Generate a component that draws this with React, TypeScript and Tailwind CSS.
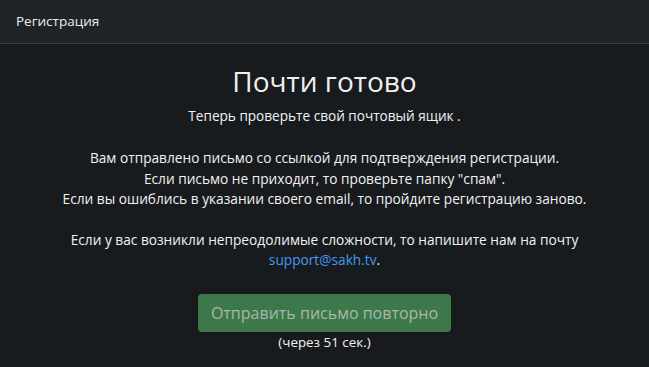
export default function App() {
  return (
    <div className="min-h-screen w-full bg-[#181b1e] text-white" style={{ fontFamily: '"Open Sans", "Noto Sans", sans-serif' }}>
      <div className="h-[44px] flex items-center px-4 bg-[#202326] border-b border-[#3b3e41]">
        <span className="text-[13.5px] text-[#e9ecef]">Регистрация</span>
      </div>
      <div className="flex flex-col items-center text-center pt-[20px]">
        <h1 className="text-[28px] leading-[34px] text-[#f0f0f0]">Почти готово</h1>
        <p className="mt-[8px] text-[13.6px] leading-[20px] text-[#f2f2f2]">Теперь проверьте свой почтовый ящик .</p>
        <p className="mt-[22px] text-[13.7px] leading-[20.5px] text-[#f2f2f2]">
          Вам отправлено письмо со ссылкой для подтверждения регистрации.
          <br />
          Если письмо не приходит, то проверьте папку "спам".
          <br />
          Если вы ошиблись в указании своего email, то пройдите регистрацию заново.
        </p>
        <p className="mt-[20px] text-[13.7px] leading-[20.5px] text-[#f2f2f2]">
          Если у вас возникли непреодолимые сложности, то напишите нам на почту
          <br />
          <a href="#" className="text-[#3d9bf3]">support@sakh.tv</a>.
        </p>
        <button
          disabled
          className="mt-[23px] h-[38px] w-[253px] rounded-[4px] bg-[#3d784b] text-[16px] text-[#a6b8aa]"
        >
          Отправить письмо повторно
        </button>
        <p className="mt-[2px] text-[13.4px] leading-[16px] text-[#f2f2f2]">(через 51 сек.)</p>
      </div>
    </div>
  );
}
